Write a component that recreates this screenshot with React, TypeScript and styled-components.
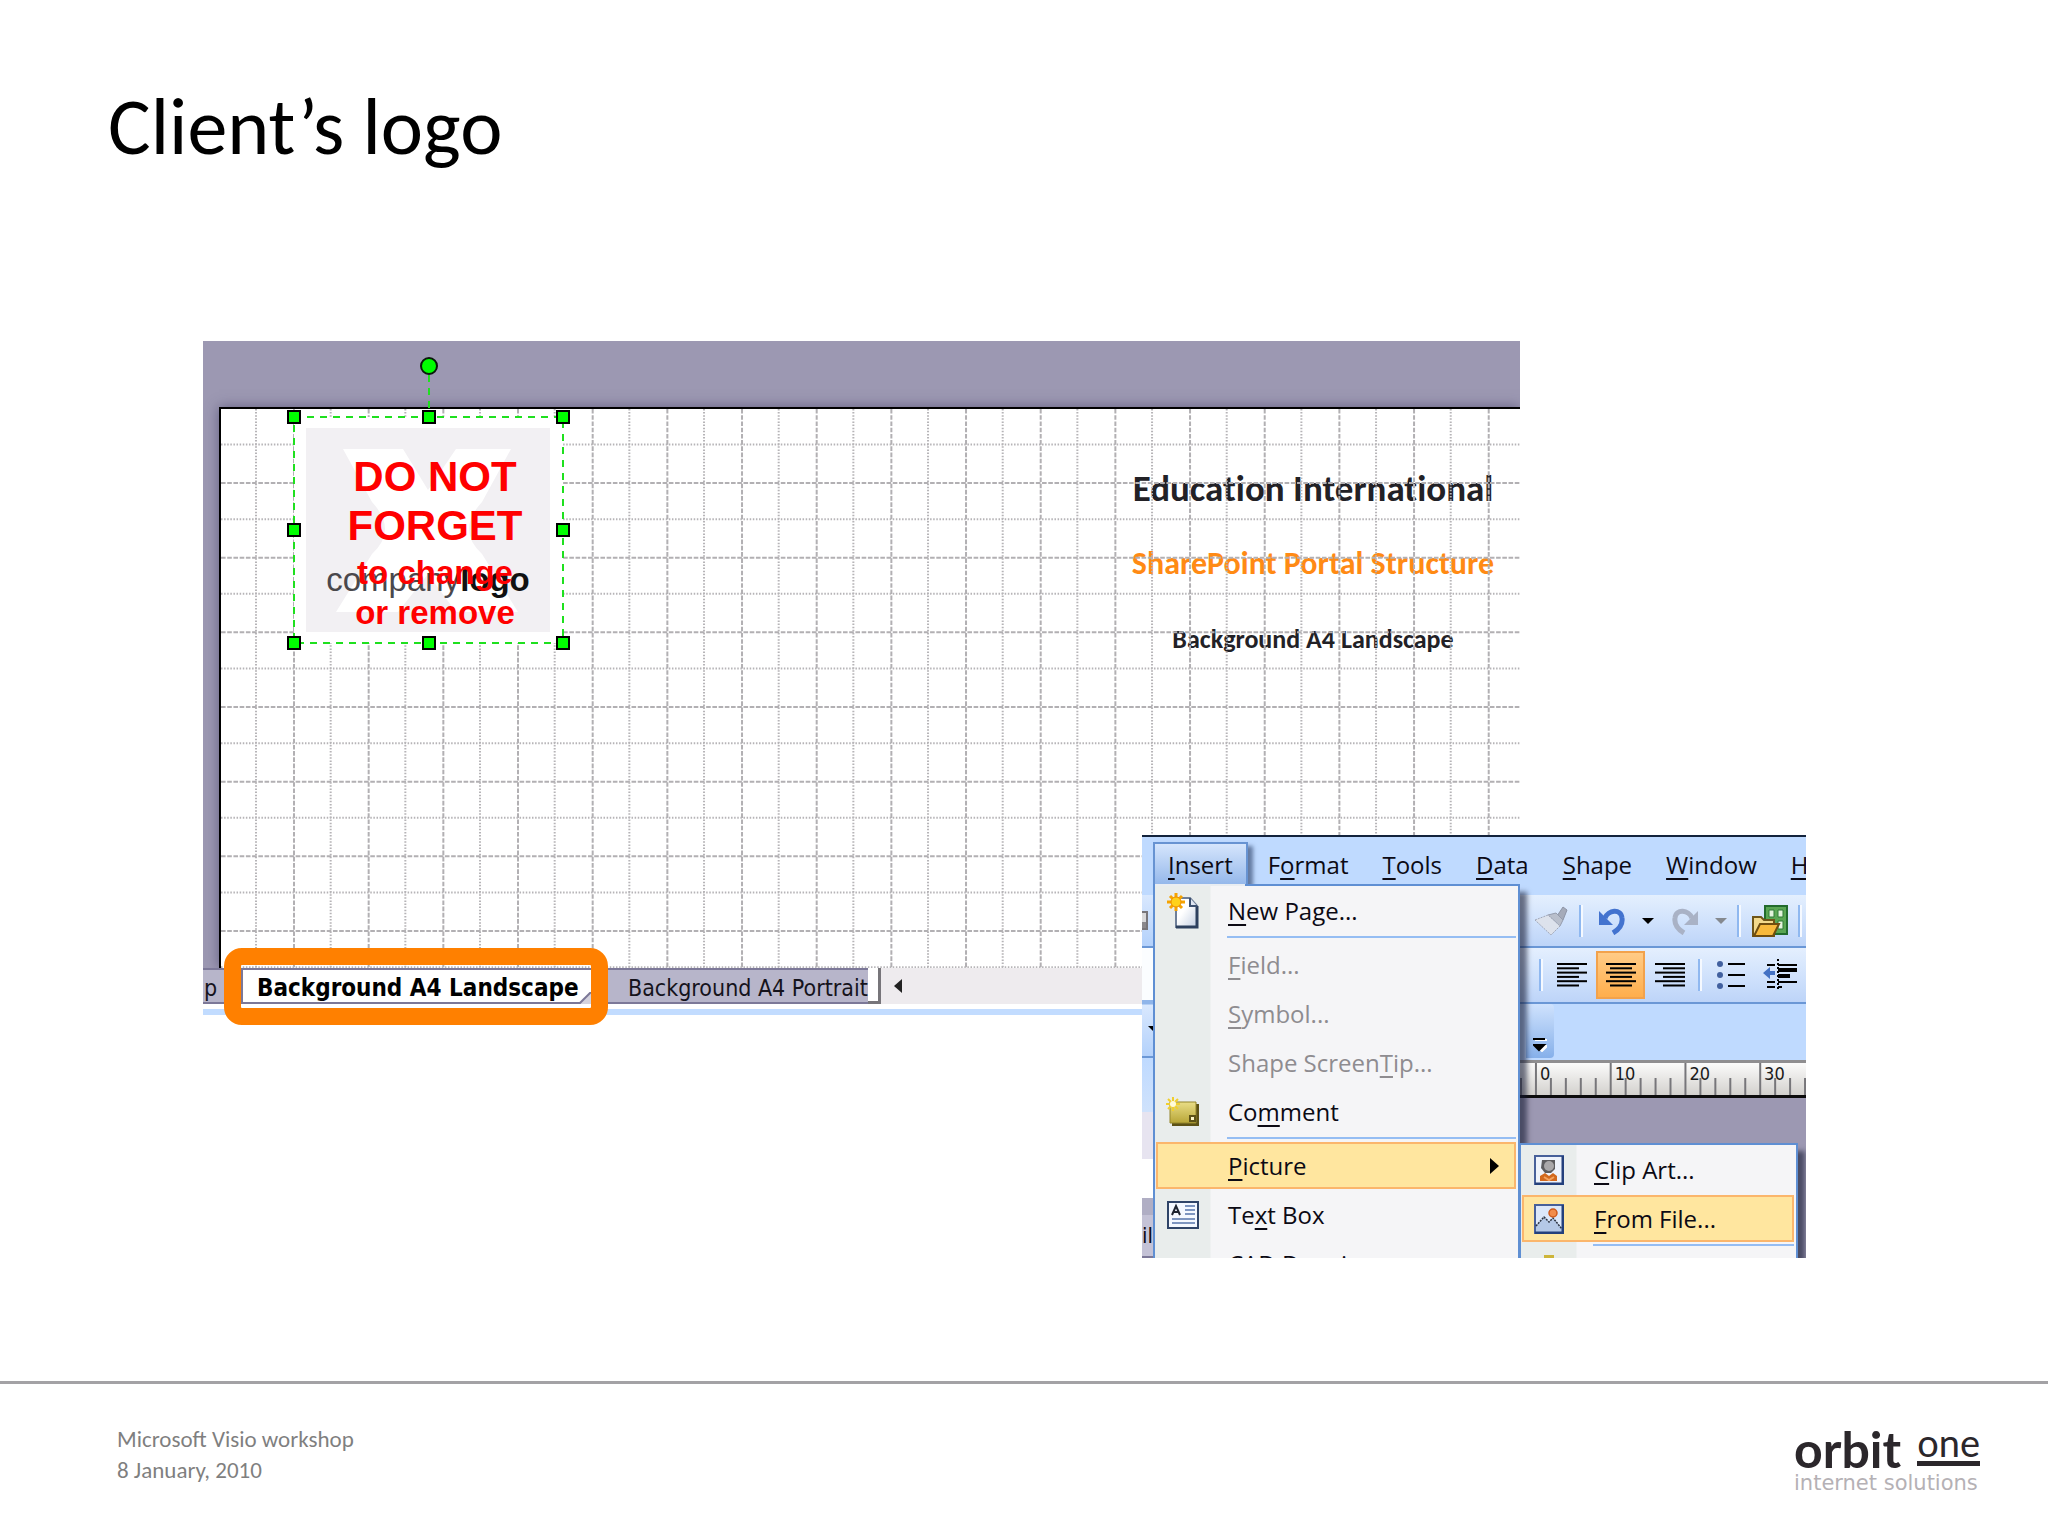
import React from "react";
import styled, { createGlobalStyle, css } from "styled-components";

const GlobalStyle = createGlobalStyle`
  *, *::before, *::after { box-sizing: border-box; }
  body { margin: 0; background: #fff; }
  button { margin: 0; padding: 0; border: 0; background: none; color: inherit; font: inherit; text-align: left; }
`;

const slideFont = `Carlito, Lato, "Open Sans", sans-serif`;
const menuFont = `"Open Sans", "Noto Sans", sans-serif`;
const tabFont = `"DejaVu Sans Condensed", "Noto Sans", sans-serif`;

/* ---------- Slide ---------- */

const Slide = styled.main`
  display: grid;
  grid-template-rows: auto 1fr auto;
  min-height: 100vh;
  background: #fff;
  font-family: ${slideFont};
`;

const Header = styled.header`
  padding: 81px 108px 0;
`;

const Title = styled.h1`
  margin: 0;
  font-size: 80px;
  line-height: 92px;
  font-weight: 400;
  color: #000;
`;

const Stage = styled.section`
  position: relative;
  margin: 168px 242px 0 203px;
  min-height: 917px;
`;

const Footer = styled.footer`
  display: flex;
  justify-content: space-between;
  align-items: flex-start;
  padding: 40px 68px 0 117px;
  height: 155px;
  border-top: 3px solid #a3a2a5;
`;

const FooterText = styled.p`
  margin: 0;
  font-size: 23px;
  line-height: 31px;
  color: #7f7f7f;
`;

const Brand = styled.div`
  width: 186px;
  color: #2b272b;
  font-family: Lato, sans-serif;
`;

const BrandTop = styled.div`
  display: flex;
  justify-content: space-between;
  align-items: flex-start;
`;

const BrandOrbit = styled.span`
  font-size: 50px;
  line-height: 50px;
  font-weight: 700;
`;

const BrandOne = styled.span`
  height: 42px;
  border-bottom: 5px solid #2b272b;
  font-size: 38px;
  line-height: 36px;
`;

const BrandTag = styled.div`
  font: 21px/18px "DejaVu Sans", sans-serif;
  color: #b5b1b5;
`;

/* ---------- Drawing window ---------- */

const DrawingWindow = styled.div`
  margin-right: 286px;
  border-bottom: 6px solid #c2dcff;
`;

const Pasteboard = styled.div`
  padding: 66px 0 0 16px;
  background: #9c98b2;
  overflow: hidden;
`;

const Page = styled.div`
  position: relative;
  height: 561px;
  border-top: 2px solid #000;
  border-left: 2px solid #000;
  background: #fff;
  box-shadow: 0 0 12px rgba(60, 55, 95, 0.6);
`;

const GridSvg = styled.svg`
  position: absolute;
  inset: 0;
  width: 100%;
  height: 100%;
`;

const TitleBlock = styled.div`
  position: absolute;
  top: 56px;
  right: 17px;
  width: 380px;
  display: grid;
  grid-auto-rows: 75px;
  text-align: center;
  font-weight: 700;
  font-variant-ligatures: none;
  line-height: 48px;
  color: #222126;
`;

const TitleLine = styled.div<{ $size: number; $accent?: boolean }>`
  font-size: ${(p) => p.$size}px;
  color: ${(p) => (p.$accent ? "#ff8a14" : "inherit")};
`;

const Selection = styled.div`
  position: absolute;
  left: 73px;
  top: 8px;
  width: 269px;
  height: 226px;
  padding: 11px 13px 11px 12px;
  background: #fff;
`;

const SelectionSvg = styled.svg`
  position: absolute;
  left: -10px;
  top: -64px;
`;

const LogoPlate = styled.div`
  position: relative;
  height: 204px;
  background: #f2f0f3;
`;

const PlateSvg = styled.svg`
  position: absolute;
  inset: 0;
`;

const CompanyName = styled.div`
  position: absolute;
  left: 0;
  right: 0;
  top: 134px;
  text-align: center;
  font: 33px/36px "Liberation Sans", Arial, sans-serif;
  color: #4a484c;

  b { color: #111; }
`;

const Warning = styled.div`
  position: absolute;
  left: 0;
  right: 0;
  top: 24px;
  padding-left: 14px;
  text-align: center;
  white-space: nowrap;
  color: #f00;
  font: 700 42px/49px "Liberation Sans", Arial, sans-serif;
`;

const WarningSmall = styled.div`
  padding-top: 3px;
  font-size: 33px;
  line-height: 40px;
`;

/* ---------- Sheet tabs ---------- */

const TabBar = styled.div`
  display: flex;
  height: 41px;
  border-bottom: 5px solid #fff;
  background: #eeebee;
  font-family: ${tabFont};
`;

const Tab = styled.button<{ $pad: number; $active?: boolean }>`
  position: relative;
  height: 36px;
  padding-left: ${(p) => p.$pad}px;
  border-top: 2px solid #7c7898;
  border-bottom: 2px solid #7c7898;
  background: #b7b5ca;
  font-size: 23px;
  line-height: 36px;
  white-space: nowrap;
  color: #15131c;
  ${(p) =>
    p.$active &&
    css`
      z-index: 1;
      width: 350px;
      border-left: 2px solid #7c7898;
      background: #fff;
      font-size: 24px;
      font-weight: 700;
      color: #000;
    `}
`;

const Highlight = styled.span`
  position: absolute;
  inset: -22px -17px -23px -19px;
  border: 17px solid #ff8000;
  border-radius: 18px;
`;

const TabCorner = styled.svg`
  position: absolute;
  right: 0;
  bottom: -2px;
`;

const Splitter = styled.div`
  width: 13px;
  height: 36px;
  border: solid #77757a;
  border-width: 0 3px 3px 0;
  background: #fff;
`;

const ScrollBar = styled.div`
  display: flex;
  align-items: center;
  flex: 1;
  height: 36px;
  padding-left: 12px;
`;

/* ---------- Menu screenshot ---------- */

const AppWindow = styled.div`
  position: absolute;
  top: 494px;
  right: 0;
  width: 664px;
  height: 423px;
  overflow: hidden;
  border-top: 2px solid #13233c;
  background: #9c98b2;
  font-family: ${menuFont};
  font-size: 24px;
  color: #0c0a14;

  u {
    text-decoration-thickness: 2px;
    text-underline-offset: 4px;
  }
`;

const MenuBar = styled.nav`
  display: flex;
  height: 58px;
  padding: 5px 0 0 11px;
  background: #bfdaff;
  white-space: nowrap;
`;

const MenuTitle = styled.button<{ $open?: boolean }>`
  flex: none;
  height: 46px;
  padding: 0 17px;
  line-height: 42px;
  ${(p) =>
    p.$open &&
    css`
      margin-right: 3px;
      padding: 0 13px;
      border: 2px solid #6793d2;
      background: linear-gradient(#d5e5fc, #92b6ea);
      line-height: 38px;
      box-shadow: 5px 4px 4px rgba(40, 60, 100, 0.6);
    `}
`;

const Toolbar = styled.div<{ $indent: number; $height: number }>`
  display: flex;
  align-items: center;
  height: ${(p) => p.$height}px;
  padding-left: ${(p) => p.$indent}px;
  border-bottom: 2px solid #6a97d6;
  background: linear-gradient(#e4effe, #cfe1fc 55%, #bdd4f8);
`;

const ToolButton = styled.button<{ $on?: boolean }>`
  display: grid;
  place-items: center;
  flex: none;
  width: 49px;
  height: 48px;
  ${(p) =>
    p.$on &&
    css`
      border: 2px solid #f2a24c;
      background: linear-gradient(#ffcb86, #ffae4c);
    `}
`;

const CaretButton = styled(ToolButton)`
  width: 24px;
`;

const Divider = styled.span`
  flex: none;
  width: 4px;
  height: 32px;
  margin: 0 4px;
  border-left: 2px solid #8fb8f0;
  border-right: 2px solid #f5f9ff;
`;

const Dock = styled.div`
  height: 56px;
  padding-left: 384px;
  background: #bfdaff;
`;

const Overflow = styled.button`
  display: grid;
  place-items: end center;
  width: 28px;
  height: 54px;
  padding-bottom: 6px;
  border-radius: 0 4px 4px 0;
  background: linear-gradient(#cfe2fd, #86b0ea);
`;

const Ruler = styled.svg`
  display: block;
  width: 100%;
  height: 38px;
`;

const LeftStrip = styled.div`
  position: absolute;
  left: 0;
  top: 58px;
  width: 11px;
  height: 363px;
  display: grid;
  grid-template-rows: 53px 52px 58px 54px 47px 39px 17px 1fr;
  overflow: hidden;
  font: 22px/37px ${tabFont};
`;

const StripCell = styled.div<{ $bg: string; $line?: string }>`
  display: flex;
  align-items: center;
  justify-content: flex-end;
  overflow: hidden;
  background: ${(p) => p.$bg};
  border-bottom: ${(p) => (p.$line ? `2px solid ${p.$line}` : "0")};
`;

const MenuPanel = styled.div`
  position: absolute;
  left: 11px;
  top: 47px;
  width: 367px;
  padding: 1px 2px 1px 1px;
  border: 2px solid #5f8fd3;
  background: linear-gradient(90deg, #e9edec 55px, #f5f5f7 56px);
  box-shadow: 7px 8px 5px rgba(20, 25, 50, 0.6);

  &::before {
    content: "";
    position: absolute;
    left: 0;
    top: -2px;
    width: 90px;
    height: 2px;
    background: #e9edf2;
  }
`;

const SubPanel = styled(MenuPanel)`
  left: 377px;
  top: 306px;
  width: 279px;
  &::before { display: none; }
`;

const Item = styled.button<{ $off?: boolean; $hot?: boolean }>`
  display: grid;
  grid-template-columns: 50px 1fr auto;
  column-gap: 20px;
  align-items: center;
  width: 100%;
  height: 47px;
  margin-bottom: 2px;
  padding-right: 15px;
  border: 2px solid ${(p) => (p.$hot ? "#fbb66c" : "transparent")};
  background: ${(p) => (p.$hot ? "#ffe69f" : "transparent")};
  color: ${(p) => (p.$off ? "#8e8c90" : "inherit")};
  white-space: nowrap;

  > svg:first-child, > span:first-child { justify-self: center; }
`;

const Rule = styled.hr`
  height: 5px;
  margin: 0 0 0 71px;
  border: 0;
  border-top: 2px solid #95bdf3;
`;

/* ---------- Drawings ---------- */

const STEP = 74.67;

function PageGrid() {
  const cols = Array.from({ length: 36 }, (_, i) => i);
  const dash = { stroke: "#b2b0b3", strokeWidth: 2, strokeDasharray: "4.6 1.62" };
  const dots = { stroke: "#b6b4b7", strokeWidth: 2, strokeDasharray: "1.5 1.61" };
  return (
    <GridSvg aria-hidden="true">
      {cols.map((i) => (
        <g key={i}>
          <line x1={73 + i * STEP} x2={73 + i * STEP} y1="0" y2="100%" {...dash} />
          <line x1={35 + i * STEP} x2={35 + i * STEP} y1="0" y2="100%" {...dots} />
          <line y1={74 + i * STEP} y2={74 + i * STEP} x1="0" x2="100%" {...dash} />
          <line y1={35.5 + i * STEP} y2={35.5 + i * STEP} x1="0" x2="100%" {...dots} />
        </g>
      ))}
    </GridSvg>
  );
}

function SelectionHandles() {
  const xs = [10, 145, 279];
  const ys = [64, 177, 290];
  return (
    <SelectionSvg width="290" height="302" aria-hidden="true">
      <g stroke="#1fe01f" strokeWidth="2" strokeDasharray="7 6" fill="none">
        <rect x="10" y="64" width="269" height="226" />
        <path d="M145 22V64" />
      </g>
      <circle cx="145" cy="13" r="8" fill="#0f0" stroke="#0a1a0a" strokeWidth="2" />
      {xs.flatMap((x) =>
        ys
          .filter((y) => !(x === 145 && y === 177))
          .map((y) => (
            <rect key={`${x}-${y}`} x={x - 6} y={y - 6} width="12" height="12" fill="#0f0" stroke="#000" strokeWidth="2" />
          ))
      )}
    </SelectionSvg>
  );
}

function Caret({ color = "#000" }: { color?: string }) {
  return (
    <svg width="12" height="8" aria-hidden="true">
      <path d="M0 1H12L6 7Z" fill={color} />
    </svg>
  );
}

function NewPageIcon() {
  return (
    <svg width="32" height="36" viewBox="0 0 32 36" aria-hidden="true">
      <defs>
        <linearGradient id="sheet" x2="1" y2="1">
          <stop offset="0.4" stopColor="#fff" />
          <stop offset="1" stopColor="#c3cfe2" />
        </linearGradient>
      </defs>
      <path d="M9 5H23L30 13V34H9Z" fill="url(#sheet)" stroke="#6f7f98" strokeWidth="2" />
      <path d="M30 13V34H9" fill="none" stroke="#2d405e" strokeWidth="3" />
      <path d="M23 5V13H30" fill="#dfe6f2" stroke="#3d5170" strokeWidth="2" />
      <path d="M9 0V18M0 9H18M3 3L15 15M15 3L3 15" stroke="#f5a300" strokeWidth="3" />
      <circle cx="9" cy="9" r="5" fill="#ffd21a" stroke="#ee8d00" strokeWidth="1" />
    </svg>
  );
}

function CommentIcon() {
  return (
    <svg width="34" height="30" viewBox="0 0 34 30" aria-hidden="true">
      <defs>
        <linearGradient id="note" x2="0" y2="1">
          <stop offset="0" stopColor="#e9dd86" />
          <stop offset="1" stopColor="#b8a637" />
        </linearGradient>
      </defs>
      <path d="M6 7H33V29H6Z" fill="#5d5216" />
      <path d="M4 5H30V26H4Z" fill="url(#note)" stroke="#94852a" />
      <rect x="24" y="19" width="5" height="5" fill="#fdf6c4" stroke="#5d5216" strokeWidth="2" />
      <path d="M7 0V14M0 7H14M2 2L12 12M12 2L2 12" stroke="#f0cf2e" strokeWidth="2" />
      <circle cx="7" cy="7" r="3" fill="#fffbd8" />
    </svg>
  );
}

function TextBoxIcon() {
  return (
    <svg width="32" height="28" viewBox="0 0 32 28" aria-hidden="true">
      <rect x="1" y="1" width="30" height="26" fill="#f4f8ff" stroke="#2f4468" strokeWidth="2" />
      <path d="M5 14L9 5L13 14M6 11H12" fill="none" stroke="#1e2430" strokeWidth="2" />
      <path d="M18 5H28M18 9H28M18 13H28M5 18H28M5 22H28" stroke="#7d95c0" strokeWidth="2" />
    </svg>
  );
}

function ClipArtIcon() {
  return (
    <svg width="30" height="30" viewBox="0 0 30 30" aria-hidden="true">
      <rect x="1" y="1" width="28" height="28" fill="#eef3fb" stroke="#47609a" strokeWidth="2" />
      <path d="M29 1V29H1" fill="none" stroke="#24407c" strokeWidth="3" />
      <path d="M8 5H21V14L17 18H11L7 13Z" fill="#5d5d60" />
      <circle cx="15" cy="11" r="5" fill="#a9a8aa" />
      <path d="M6 26V21L11 18L15 21L19 18L23 21V26Z" fill="#d2691e" />
      <path d="M10 22L15 25L20 22" stroke="#f4a460" strokeWidth="2" fill="none" />
    </svg>
  );
}

function PictureIcon() {
  return (
    <svg width="30" height="30" viewBox="0 0 30 30" aria-hidden="true">
      <rect x="1" y="1" width="28" height="28" fill="#dce8fa" stroke="#47609a" strokeWidth="2" />
      <path d="M2 22L10 13L15 18L19 14L28 24V28H2Z" fill="#b4c8e6" />
      <path d="M2 22L10 13L15 18L19 14L28 25" fill="none" stroke="#2d3442" strokeWidth="1.5" strokeDasharray="2 1" />
      <circle cx="19" cy="9" r="4" fill="#f28c4a" stroke="#cf5a1c" strokeWidth="1.5" />
      <path d="M29 1V29H1" fill="none" stroke="#24407c" strokeWidth="3" />
    </svg>
  );
}

function BrushIcon() {
  return (
    <svg width="34" height="30" viewBox="0 0 34 30" aria-hidden="true">
      <path d="M23 10L29 1L33 4L29 14Z" fill="#a5abba" stroke="#8d94a6" />
      <path d="M14 9L22 7L29 14L26 20Z" fill="#b9bfcc" stroke="#959cad" />
      <path d="M1 14L14 9L26 20L17 29Z" fill="#dde2ec" stroke="#a0a7b8" strokeDasharray="2 1" />
    </svg>
  );
}

function TurnArrow({ color, flip }: { color: string; flip?: boolean }) {
  return (
    <svg width="28" height="28" viewBox="0 0 28 28" aria-hidden="true">
      <g transform={flip ? "matrix(-1 0 0 1 28 0)" : undefined}>
        <path d="M7 11C10 3 23 1 24 11C25 18 20 23 15 26" fill="none" stroke={color} strokeWidth="5" />
        <path d="M1 4V18H15Z" fill={color} />
      </g>
    </svg>
  );
}

function OpenStencilIcon() {
  return (
    <svg width="36" height="34" viewBox="0 0 36 34" aria-hidden="true">
      <rect x="13" y="2" width="22" height="28" fill="#5aa653" stroke="#226b2c" strokeWidth="2" />
      <path d="M17 6H22V13H17ZM26 6H31V13H26ZM26 17H31V25H26Z" fill="#e3f3dc" stroke="#2f7a36" />
      <path d="M1 32V13H9L12 16H22V32Z" fill="#f3d98c" stroke="#6f5518" strokeWidth="2" />
      <path d="M2 32L8 20H27L21 32Z" fill="#f8b93c" stroke="#6f4d10" strokeWidth="2" />
    </svg>
  );
}

function AlignIcon({ mode }: { mode: "left" | "center" | "right" }) {
  return (
    <svg width="30" height="26" aria-hidden="true">
      {[0, 1, 2, 3, 4, 5].map((i) => {
        const w = i % 2 ? 22 : 30;
        const x = mode === "left" ? 0 : mode === "center" ? (30 - w) / 2 : 30 - w;
        return <rect key={i} x={x} y={1 + i * 4.3} width={w} height="2" fill="#000" />;
      })}
    </svg>
  );
}

function BulletsIcon() {
  return (
    <svg width="28" height="28" aria-hidden="true">
      {[3, 14, 25].map((y) => (
        <g key={y}>
          <circle cx="3" cy={y} r="3" fill="#41609f" />
          <rect x="11" y={y - 1} width="17" height="2" fill="#000" />
        </g>
      ))}
    </svg>
  );
}

function OutdentIcon() {
  return (
    <svg width="34" height="32" aria-hidden="true">
      <path d="M4 6H12M15 6H34M4 23H12M15 23H34M4 28H12M15 28H19" stroke="#000" strokeWidth="2" />
      <path d="M15 11H34M15 17H27" stroke="#000" strokeWidth="4" />
      <path d="M15 0V32" stroke="#000" strokeWidth="2" strokeDasharray="2 2" />
      <path d="M0 14L7 8V12H12V16H7V20Z" fill="#4472c4" />
    </svg>
  );
}

function RulerScale() {
  const ticks = Array.from({ length: 20 }, (_, i) => i);
  return (
    <Ruler aria-label="Ruler">
      <defs>
        <linearGradient id="ruler" x2="0" y2="1">
          <stop offset="0" stopColor="#fff" />
          <stop offset="1" stopColor="#cfcdc9" />
        </linearGradient>
      </defs>
      <rect width="100%" height="38" fill="url(#ruler)" />
      <rect width="100%" height="3" fill="#8f8e90" />
      <rect y="35" width="100%" height="3" fill="#0c0c0c" />
      {ticks.map((i) => {
        const x = 379 + i * 14.95;
        return <path key={i} d={`M${x} ${i % 5 === 1 ? 3 : 18}V35`} stroke="#77767a" strokeWidth="2" />;
      })}
      {["0", "10", "20", "30"].map((t, i) => (
        <text key={t} x={398 + i * 74.7} y="20" fontFamily={tabFont} fontSize="18" fill="#1a1a1a">
          {t}
        </text>
      ))}
    </Ruler>
  );
}

/* ---------- Composition ---------- */

export default function App() {
  return (
    <Slide>
      <GlobalStyle />
      <Header>
        <Title>Client’s logo</Title>
      </Header>

      <Stage>
        <DrawingWindow>
          <Pasteboard>
            <Page>
              <TitleBlock>
                <TitleLine $size={37}>Education International</TitleLine>
                <TitleLine $size={32} $accent>SharePoint Portal Structure</TitleLine>
                <TitleLine $size={26}>Background A4 Landscape</TitleLine>
              </TitleBlock>
              <PageGrid />
              <Selection>
                <LogoPlate>
                  <PlateSvg width="244" height="204" aria-hidden="true">
                    <path
                      d="M37 21H97L122 62L150 21H205L176 74Q150 102 176 126L212 184H150L122 146L92 184H30L66 126Q92 102 66 74Z"
                      fill="#fff"
                    />
                  </PlateSvg>
                  <CompanyName>company<b>logo</b></CompanyName>
                  <Warning>
                    DO NOT<br />FORGET
                    <WarningSmall>to change<br />or remove</WarningSmall>
                  </Warning>
                </LogoPlate>
                <SelectionHandles />
              </Selection>
            </Page>
          </Pasteboard>
          <TabBar>
            <Tab $pad={1} style={{ width: 38 }}>p</Tab>
            <Tab $pad={14} $active>
              Background A4 Landscape
              <TabCorner width="12" height="12" aria-hidden="true">
                <path d="M12 0V12H0Z" fill="#d5d3de" />
                <path d="M12 0L0 12" stroke="#7c7898" strokeWidth="2" />
              </TabCorner>
              <Highlight />
            </Tab>
            <Tab $pad={37}>Background A4 Portrait</Tab>
            <Splitter />
            <ScrollBar>
              <svg width="10" height="16" aria-hidden="true">
                <path d="M9 1V15L1 8Z" fill="#222" />
              </svg>
            </ScrollBar>
          </TabBar>
        </DrawingWindow>

        <AppWindow>
          <MenuBar>
            <MenuTitle $open><u>I</u>nsert</MenuTitle>
            <MenuTitle>F<u>o</u>rmat</MenuTitle>
            <MenuTitle><u>T</u>ools</MenuTitle>
            <MenuTitle><u>D</u>ata</MenuTitle>
            <MenuTitle><u>S</u>hape</MenuTitle>
            <MenuTitle><u>W</u>indow</MenuTitle>
            <MenuTitle><u>H</u></MenuTitle>
          </MenuBar>
          <Toolbar $indent={384} $height={53}>
            <ToolButton aria-label="Format Painter"><BrushIcon /></ToolButton>
            <Divider />
            <ToolButton aria-label="Undo"><TurnArrow color="#4373cf" /></ToolButton>
            <CaretButton aria-label="Undo list"><Caret /></CaretButton>
            <ToolButton aria-label="Redo"><TurnArrow color="#a9b2c6" flip /></ToolButton>
            <CaretButton aria-label="Redo list"><Caret color="#85898f" /></CaretButton>
            <Divider />
            <ToolButton aria-label="Shapes"><OpenStencilIcon /></ToolButton>
            <Divider />
          </Toolbar>
          <Toolbar $indent={393} $height={56}>
            <Divider />
            <ToolButton aria-label="Align Left"><AlignIcon mode="left" /></ToolButton>
            <ToolButton aria-label="Center" $on><AlignIcon mode="center" /></ToolButton>
            <ToolButton aria-label="Align Right"><AlignIcon mode="right" /></ToolButton>
            <Divider />
            <ToolButton aria-label="Bullets"><BulletsIcon /></ToolButton>
            <ToolButton aria-label="Decrease Indent"><OutdentIcon /></ToolButton>
          </Toolbar>
          <Dock>
            <Overflow aria-label="Toolbar Options">
              <svg width="14" height="14" aria-hidden="true">
                <path d="M2 2H14M4 8H14L9 13Z" stroke="#fff" strokeWidth="2" fill="#fff" />
                <path d="M0 1H12M1 7H11L6 12Z" stroke="#000" strokeWidth="2" fill="#000" />
              </svg>
            </Overflow>
          </Dock>
          <RulerScale />

          <LeftStrip>
            <StripCell $bg="linear-gradient(#d9e8fe, #b3d1fb)" $line="#6a97d6">
              <svg width="11" height="20" aria-hidden="true">
                <path d="M0 1H5V18H0" fill="#d8d8da" stroke="#77757a" strokeWidth="2" />
                <path d="M0 11H4V17H0Z" fill="#8a888c" />
              </svg>
            </StripCell>
            <StripCell $bg="#fbfdff" />
            <StripCell $bg="linear-gradient(#8fb5ea 4px, #d9e8fe 5px, #b3d1fb)" $line="#6a97d6">
              <svg width="5" height="5" aria-hidden="true">
                <path d="M0 0H5V5Z" fill="#000" />
              </svg>
            </StripCell>
            <StripCell $bg="linear-gradient(#bfdaff, #cfe2fc)" />
            <StripCell $bg="#e7e4f0" />
            <StripCell $bg="#ffffff" />
            <StripCell $bg="#b0aec4" />
            <StripCell $bg="#c4c2d6" $line="#7c7898">il</StripCell>
          </LeftStrip>

          <MenuPanel role="menu">
            <Item><NewPageIcon /><span><u>N</u>ew Page...</span></Item>
            <Rule />
            <Item $off><span /><span><u>F</u>ield...</span></Item>
            <Item $off><span /><span><u>S</u>ymbol...</span></Item>
            <Item $off><span /><span>Shape Screen<u>T</u>ip...</span></Item>
            <Item><CommentIcon /><span>Co<u>m</u>ment</span></Item>
            <Rule />
            <Item $hot>
              <span />
              <span><u>P</u>icture</span>
              <svg width="9" height="16" aria-hidden="true"><path d="M0 0L9 8L0 16Z" fill="#000" /></svg>
            </Item>
            <Item><TextBoxIcon /><span>Te<u>x</u>t Box</span></Item>
            <Item><span /><span>CAD Drawing...</span></Item>
          </MenuPanel>

          <SubPanel role="menu">
            <Item><ClipArtIcon /><span><u>C</u>lip Art...</span></Item>
            <Item $hot><PictureIcon /><span><u>F</u>rom File...</span></Item>
            <Rule />
            <Item>
              <svg width="30" height="36" aria-hidden="true"><path d="M10 0H20V36H10Z" fill="#cdb53a" /></svg>
              <span />
            </Item>
          </SubPanel>
        </AppWindow>
      </Stage>

      <Footer>
        <FooterText>
          Microsoft Visio workshop<br />8 January, 2010
        </FooterText>
        <Brand>
          <BrandTop>
            <BrandOrbit>orbit</BrandOrbit>
            <BrandOne>one</BrandOne>
          </BrandTop>
          <BrandTag>internet solutions</BrandTag>
        </Brand>
      </Footer>
    </Slide>
  );
}
